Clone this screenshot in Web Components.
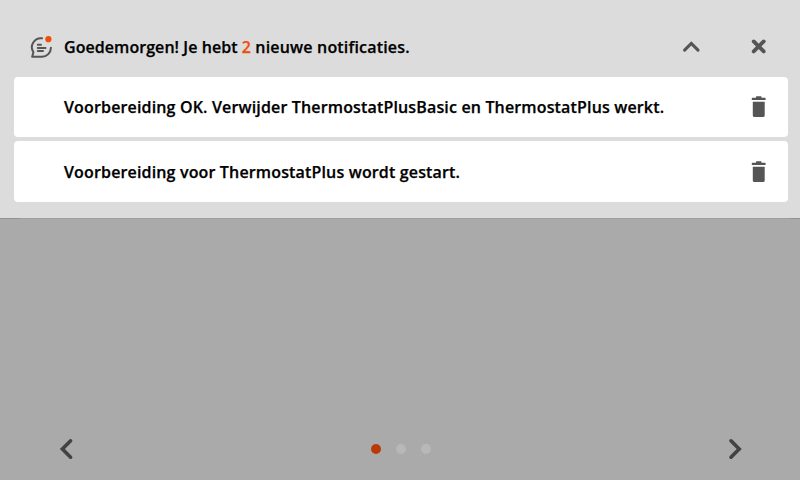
<!DOCTYPE html>
<html lang="nl">
<head>
<meta charset="utf-8">
<title>Notificaties</title>
<style>
html,body{margin:0;height:100%;background:#a9a9a9;overflow:hidden}
body{font:600 16px/22px "Open Sans","Noto Sans",sans-serif;color:#000;letter-spacing:.155px;-webkit-text-stroke:.25px currentColor}
</style>
</head>
<body>
<thermostat-screen>
  <notification-panel slot="panel">
    <span slot="title" style="letter-spacing:.06px">Goedemorgen! Je hebt <notification-count>2</notification-count><span style="letter-spacing:.18px"> nieuwe notificaties.</span></span>
    <notification-card style="--h:60px">Voorbereiding OK. Verwijder ThermostatPlusBasic en ThermostatPlus werkt.</notification-card>
    <notification-card style="--h:61px">Voorbereiding voor ThermostatPlus wordt gestart.</notification-card>
  </notification-panel>
  <page-navigation slot="navigation"></page-navigation>
</thermostat-screen>
<script>
class Base extends HTMLElement {
  connectedCallback() {
    if (!this.shadowRoot) this.attachShadow({mode: 'open'}).innerHTML = this.constructor.markup;
  }
}
customElements.define('thermostat-screen', class extends Base {
  static markup = `<style>
    :host{display:flex;flex-direction:column;justify-content:space-between;width:800px;height:480px;background:#aaa}
  </style><slot name="panel"></slot><slot name="navigation"></slot>`;
});
customElements.define('notification-count', class extends Base {
  static markup = `<style>:host{color:#f04e0a}</style><slot></slot>`;
});
customElements.define('ui-icon', class extends Base {
  static icons = {
    message: ['0 0 24 24', '<g fill="none" stroke="#555" stroke-width="2" stroke-linecap="round" stroke-linejoin="round"><path d="M12 3.3A9 9 0 0 0 3.4 17.2L2.2 21.8H12A9 9 0 0 0 20.9 12.8"/><path d="M7.8 9.8H11M7.8 13H15.5M7.8 16.1H13"/></g><circle cx="18.4" cy="4.2" r="3.1" fill="#f04e0a"/>'],
    up: ['0 0 20 16', '<path d="M2.6 11.2 9.3 4.5 16 11.2" fill="none" stroke="#555" stroke-width="3.1" stroke-linecap="round"/>'],
    close: ['0 0 16 16', '<path d="M2.7 2.4 12.7 12.4M12.7 2.4 2.7 12.4" fill="none" stroke="#555" stroke-width="3.8" stroke-linecap="round"/>'],
    trash: ['0 0 16 24', '<path fill="#555" d="M5 1.7Q5 1.2 5.5 1.2H10Q10.5 1.2 10.5 1.7V2.8H14Q14.6 2.8 14.6 3.4V5H.8V3.4Q.8 2.8 1.4 2.8H5ZM1.8 6.8H13.7V20.4Q13.7 22 12.1 22H3.4Q1.8 22 1.8 20.4Z"/>'],
    left: ['0 0 16 24', '<path d="M12.6 3.8 4.4 12 12.6 20.2" fill="none" stroke="#424242" stroke-width="3.6" stroke-linecap="round"/>'],
    right: ['0 0 16 24', '<path d="M4 3.8 12.2 12 4 20.2" fill="none" stroke="#424242" stroke-width="3.6" stroke-linecap="round"/>']
  };
  connectedCallback() {
    if (this.shadowRoot) return;
    const [box, art] = this.constructor.icons[this.getAttribute('name')];
    const [, , w, h] = box.split(' ');
    this.attachShadow({mode: 'open'}).innerHTML =
      `<style>:host{display:block;flex:none}svg{display:block}</style><svg width="${w}" height="${h}" viewBox="${box}">${art}</svg>`;
  }
});
customElements.define('notification-panel', class extends Base {
  static markup = `<style>
    :host{display:block;box-sizing:border-box;height:219px;padding:17px 12px 0 14px;background:linear-gradient(90deg,#929292 20px,#9e9e9e 20px 790px,#929292 790px) 0 218px/100% 1px no-repeat,#dcdcdc}
    header{display:grid;grid-template-columns:35px 1fr 20px 49px 16px;align-items:center;height:60px;padding:0 21px 0 15px;box-sizing:border-box}
    header ui-icon:last-child{grid-column:5}
    section{display:flex;flex-direction:column;gap:4px}
    .t{white-space:nowrap}
    header ui-icon:first-child{margin-left:1px}
  </style>
  <header><ui-icon name="message"></ui-icon><div class="t"><slot name="title"></slot></div><ui-icon name="up"></ui-icon><ui-icon name="close"></ui-icon></header>
  <section><slot></slot></section>`;
});
customElements.define('notification-card', class extends Base {
  static markup = `<style>
    :host{display:flex;align-items:center;justify-content:space-between;height:var(--h);box-sizing:border-box;padding:0 21px 0 50px;background:#fff;border-radius:4px;white-space:nowrap}
  </style><span><slot></slot></span><ui-icon name="trash"></ui-icon>`;
});
customElements.define('page-navigation', class extends Base {
  static markup = `<style>
    :host{display:flex;align-items:center;justify-content:space-between;height:62px;box-sizing:border-box;padding:0 57px 0 58px}
    div{display:flex;gap:15px}
    i{width:10px;height:10px;border-radius:50%;background:#b8b8b8}
    i:first-child{background:#b83b06}
  </style><ui-icon name="left"></ui-icon><div><i></i><i></i><i></i></div><ui-icon name="right"></ui-icon>`;
});
</script>
</body>
</html>
